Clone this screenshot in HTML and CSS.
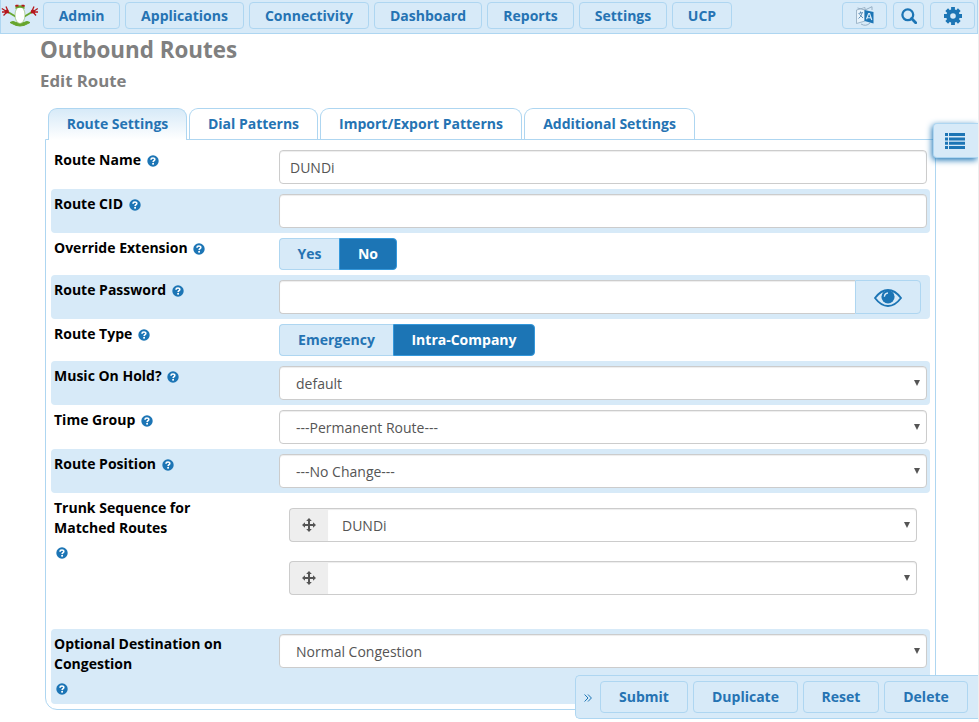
FILE: index.html
```html
<!DOCTYPE html>
<html lang="en">
<head>
    <meta charset="UTF-8">
    <meta name="viewport" content="width=device-width, initial-scale=1.0">
    <title>Outbound Routes</title>
    <link rel="stylesheet" href="styles.css">
</head>
<body>

<svg class="hidden">
    <symbol id="help" viewBox="0 0 12 12">
        <circle cx="6" cy="6" r="5.7" fill="#1c75b5"/>
        <path d="M4 4.7C4.1 2.4 8 2.5 7.8 4.6C7.7 5.7 6.2 5.8 6.1 7.1" fill="none" stroke="#fff" stroke-width="1.6"/>
        <rect x="5.2" y="8" width="1.8" height="1.6" fill="#fff"/>
    </symbol>
    <symbol id="arrows" viewBox="0 0 14 14">
        <path d="M7 0L9.8 3H8V6H11V4.2L14 7L11 9.8V8H8V11H9.8L7 14L4.2 11H6V8H3V9.8L0 7L3 4.2V6H6V3H4.2Z" fill="#555"/>
    </symbol>
</svg>

<!-- Top menu -->
<nav class="navbar">
    <a href="#" class="logo">
        <svg width="38" height="26" viewBox="0 0 38 26">
            <path d="M9 20.5Q12 18.5 15 20.5Q19 22.5 23 20.5Q26 18.500 29 20.500L27 21.500Q19 26.500 11 21.500Z" fill="#67a52d" stroke="#67a52d"/>
            <path d="M14.500 14.500L7 10M23.500 14.500L31 10" stroke="#67a52d" stroke-width="1.800"/>
            <path d="M8 11L.8 6.500M7 9L5 4.500M6 10H1M6 10L2.500 13.500M30 11L36.800 6.500M31 9L33 4.500M32 10H37M32 10L35 13.500" stroke="#b5171c" stroke-width="1.300"/>
            <circle cx="5.800" cy="9.500" r="2" fill="#b5171c"/>
            <circle cx="31.800" cy="9.500" r="2" fill="#b5171c"/>
            <ellipse cx="19" cy="13" rx="5" ry="8.500" fill="#fff" stroke="#84b755" stroke-width=".6"/>
            <path d="M14.500 7V4Q19 2.500 23.500 4V7Q19 4.500 14.500 7" fill="#67a52d"/>
            <path d="M14.500 4.300L15.300 3.600H17.500M20.500 3.600H22.700L23.500 4.300" fill="none" stroke="#b5171c" stroke-width="1.600"/>
        </svg>
    </a>
    <button class="btn admin">Admin</button>
    <button class="btn applications">Applications</button>
    <button class="btn connectivity">Connectivity</button>
    <button class="btn dashboard">Dashboard</button>
    <button class="btn reports">Reports</button>
    <button class="btn settings">Settings</button>
    <button class="btn ucp">UCP</button>
    <div class="nav-right">
        <button class="btn icon-btn">
            <svg width="18" height="20" viewBox="0 0 18 20">
                <path d="M.5 4L9 1.5V15L.5 17.5Z" fill="#e8f3fb" stroke="#8fa9bf" stroke-width=".8"/>
                <path d="M1.5 2L9 4L16 .7V4M5 18Q10 21 14 17" fill="none" stroke="#8fa9bf" stroke-width=".9"/>
                <path d="M8.5 4L17.5 6V17.5L8.5 15Z" fill="#1c75b5"/>
                <path d="M2.5 7.5L7 6.5M4.5 5.5V7M6 7Q5 11 2.5 12.5M3.5 8.5L7 12" fill="none" stroke="#5286af" stroke-width=".9"/>
                <path d="M10.5 13.3L12.6 7.5H13.6L15.8 14M11.5 11.5L14.8 12" fill="none" stroke="#d7eaf8" stroke-width="1.2"/>
            </svg>
        </button>
        <button class="btn icon-btn search">
            <svg width="16" height="16" viewBox="0 0 16 16" fill="none" stroke="#1c75b5">
                <circle cx="6.8" cy="6.8" r="5.4" stroke-width="2.3"/>
                <path d="M10.6 10.6L14.7 14.7" stroke-width="2.8" stroke-linecap="round"/>
            </svg>
        </button>
        <button class="btn icon-btn">
            <svg width="18" height="18" viewBox="0 0 18 18" fill="none" stroke="#1c75b5">
                <circle cx="9" cy="9" r="4.8" stroke-width="4"/>
                <path d="M9 0V3M9 15V18M0 9H3M15 9H18M2.7 2.7L4.8 4.8M13.2 13.2L15.3 15.3M15.3 2.7L13.2 4.8M4.8 13.2L2.7 15.3" stroke-width="3.8"/>
            </svg>
        </button>
    </div>
</nav>

<div class="container">
    <h1>Outbound Routes</h1>
    <h2>Edit Route</h2>

    <div class="tabs">
        <a href="#" class="tab active">Route Settings</a>
        <a href="#" class="tab dial">Dial Patterns</a>
        <a href="#" class="tab import">Import/Export Patterns</a>
        <a href="#" class="tab additional">Additional Settings</a>
    </div>

    <!-- Route settings -->
    <form class="panel">
        <div class="row">
            <label>Route Name <svg class="help"><use href="#help"/></svg></label>
            <input type="text" class="control" value="DUNDi">
        </div>
        <div class="row shaded">
            <label>Route CID <svg class="help"><use href="#help"/></svg></label>
            <input type="text" class="control">
        </div>
        <div class="row">
            <label>Override Extension <svg class="help"><use href="#help"/></svg></label>
            <div class="toggle">
                <span class="yes">Yes</span>
                <span class="no on">No</span>
            </div>
        </div>
        <div class="row shaded">
            <label>Route Password <svg class="help"><use href="#help"/></svg></label>
            <div class="password">
                <input type="text" class="control">
                <button type="button" class="eye">
                    <svg width="28" height="20" viewBox="0 0 28 20">
                        <path d="M1 10Q7 2 14 2T27 10Q21 18 14 18T1 10Z" fill="none" stroke="#1c75b5" stroke-width="1.8"/>
                        <circle cx="14" cy="8.8" r="6.6" fill="#1c75b5"/>
                        <path d="M10.4 8.8Q10.6 5.3 14 5" fill="none" stroke="#d7eaf8" stroke-width="1.3"/>
                    </svg>
                </button>
            </div>
        </div>
        <div class="row">
            <label>Route Type <svg class="help"><use href="#help"/></svg></label>
            <div class="toggle">
                <span class="emergency">Emergency</span>
                <span class="intra on">Intra-Company</span>
            </div>
        </div>
        <div class="row shaded">
            <label>Music On Hold? <svg class="help"><use href="#help"/></svg></label>
            <div class="select"><select class="control"><option>default</option></select></div>
        </div>
        <div class="row">
            <label>Time Group <svg class="help"><use href="#help"/></svg></label>
            <div class="select"><select class="control"><option>---Permanent Route---</option></select></div>
        </div>
        <div class="row shaded">
            <label>Route Position <svg class="help"><use href="#help"/></svg></label>
            <div class="select"><select class="control"><option>---No Change---</option></select></div>
        </div>
        <div class="row trunk-row">
            <label>Trunk Sequence for Matched Routes <svg class="help below"><use href="#help"/></svg></label>
            <div class="trunks">
                <div class="trunk">
                    <span class="addon"><svg width="14" height="14"><use href="#arrows"/></svg></span>
                    <div class="select"><select class="control"><option>DUNDi</option></select></div>
                </div>
                <div class="trunk">
                    <span class="addon"><svg width="14" height="14"><use href="#arrows"/></svg></span>
                    <div class="select"><select class="control"><option></option></select></div>
                </div>
            </div>
        </div>
        <div class="row shaded destination">
            <label>Optional Destination on Congestion <svg class="help below"><use href="#help"/></svg></label>
            <div class="select"><select class="control"><option>Normal Congestion</option></select></div>
        </div>
    </form>
</div>

<!-- Side list toggle -->
<div class="side-toggle">
    <svg width="20" height="16" viewBox="0 0 20 16" fill="#1c75b5">
        <path d="M0 0H3V3H0ZM4 0H20V3H4ZM0 4.4H3V7.4H0ZM4 4.4H20V7.4H4ZM0 8.7H3V11.7H0ZM4 8.7H20V11.7H4ZM0 13H3V16H0ZM4 13H20V16H4Z"/>
    </svg>
</div>

<!-- Action bar -->
<div class="actions">
    <span class="collapse">
        <svg width="8" height="8" viewBox="0 0 8 8" fill="none" stroke="#1c75b5">
            <path d="M.6 .5L4 4L.6 7.5M4 .5L7.4 4L4 7.5"/>
        </svg>
    </span>
    <button class="btn submit">Submit</button>
    <button class="btn duplicate">Duplicate</button>
    <button class="btn reset">Reset</button>
    <button class="btn delete">Delete</button>
</div>

</body>
</html>
```
FILE: styles.css
```css
* {
    box-sizing: border-box;
}
body {
    height: 722px;
    margin: 0;
    overflow: hidden;
    border-right: 1px solid #eee;
    background-color: #fff;
    color: #000;
    font: 14px/20px "Open Sans", sans-serif;
}
.hidden {
    display: none;
}
svg {
    flex: none;
}
h1, h2 {
    margin: 0;
    color: #808080;
    font-weight: 700;
}
h1 {
    padding-top: 3px;
    font-size: 22.4px;
    line-height: 26px;
}
h2 {
    margin-top: 8px;
    font-size: 16.8px;
    line-height: 20px;
}
.navbar {
    display: flex;
    gap: 5px;
    height: 34px;
    padding: 2px 2px 0 0;
    border: 1px solid #aed6f1;
    border-top: 0;
    background-color: #d7eaf8;
}
.logo {
    width: 37px;
    height: 26px;
}
.btn {
    display: flex;
    align-items: center;
    justify-content: center;
    height: 27px;
    padding: 0;
    border: 1px solid #aed6f1;
    border-radius: 4px;
    background-color: #d7eaf8;
    color: #2573b3;
    font: 700 14px/20px "Open Sans", sans-serif;
}
.admin { width: 77px; }
.applications { width: 119px; }
.connectivity { width: 120px; }
.dashboard { width: 108px; }
.reports { width: 87px; }
.settings { width: 88px; }
.ucp { width: 60px; }
.nav-right {
    display: flex;
    gap: 6px;
    margin-left: auto;
}
.icon-btn {
    width: 45px;
}
.search {
    width: 31px;
}
.container {
    padding: 0 42px 0 40px;
}
.tabs {
    display: flex;
    gap: 2px;
    margin: 17px 0 0 8px;
}
.tab {
    height: 31px;
    border: 1px solid #aed6f1;
    border-bottom: 0;
    border-radius: 9px 9px 0 0;
    color: #2573b3;
    font-weight: 700;
    line-height: 30px;
    text-align: center;
    text-decoration: none;
}
.active {
    z-index: 1;
    width: 139px;
    height: 32px;
    margin-bottom: -1px;
    background: linear-gradient(#d7eaf8, #fff);
}
.dial { width: 129px; }
.import { width: 202px; }
.additional { width: 171px; }
.panel {
    width: 891px;
    height: 571px;
    margin-left: 5px;
    padding: 5px;
    border: 1px solid #aed6f1;
    border-radius: 0 0 12px 12px;
}
.row {
    display: flex;
    width: 879px;
    padding: 5px 3px;
    border-radius: 4px;
}
.shaded {
    background-color: #d7eaf8;
}
.row label {
    width: 175px;
    margin-right: 50px;
    font-weight: 700;
}
.help {
    width: 12px;
    height: 12px;
    margin-left: 2px;
    vertical-align: -1.5px;
}
.below {
    display: block;
    margin: 9px 0 0 2px;
}
.control {
    display: block;
    width: 648px;
    height: 34px;
    padding: 0 10px;
    border: 1px solid #ccc;
    border-radius: 4px;
    outline: none;
    background-color: #fff;
    box-shadow: inset 0 1px 1px rgba(0, 0, 0, 0.075);
    color: #555;
    font: 14px/20px "Open Sans", sans-serif;
}
.select {
    position: relative;
}
.select .control {
    padding: 2px 16px 0;
    appearance: none;
}
.select::after {
    position: absolute;
    top: 14px;
    right: 7px;
    border: 3px solid transparent;
    border-top: 6px solid #555;
    border-bottom: 0;
    content: "";
}
.toggle {
    display: flex;
    font-weight: 700;
    line-height: 30px;
    text-align: center;
}
.toggle span {
    height: 32px;
    border: 1px solid #aed6f1;
    border-right: 0;
    border-radius: 4px 0 0 4px;
    background-color: #d7eaf8;
    color: #2573b3;
}
.toggle .on {
    border: 1px solid #3498db;
    border-radius: 0 4px 4px 0;
    background-color: #1c75b5;
    color: #fff;
}
.yes { width: 60px; }
.no { width: 58px; }
.emergency { width: 114px; }
.intra { width: 142px; }
.password {
    display: flex;
}
.password .control {
    width: 576px;
    border-right: 0;
    border-radius: 4px 0 0 4px;
}
.eye {
    display: flex;
    align-items: center;
    justify-content: center;
    width: 66px;
    height: 34px;
    padding: 1px 0 0;
    border: 1px solid #aed6f1;
    border-radius: 0 4px 4px 0;
    background-color: #d7eaf8;
}
.trunk-row {
    height: 136px;
}
.trunks {
    display: flex;
    flex-direction: column;
    gap: 19px;
    padding: 10px;
}
.trunk {
    display: flex;
}
.trunk .control {
    width: 589px;
    padding: 2px 14px 0;
    border-left: 0;
    border-radius: 0 4px 4px 0;
}
.addon {
    display: flex;
    align-items: center;
    justify-content: center;
    width: 39px;
    height: 34px;
    border: 1px solid #ccc;
    border-right: 0;
    border-radius: 4px 0 0 4px;
    background-color: #eee;
}
.destination {
    height: 75px;
}
.side-toggle {
    position: absolute;
    top: 123px;
    right: 1px;
    width: 45px;
    height: 35px;
    padding: 9px 0 0 11px;
    border: 1px solid #aed6f1;
    border-right: 0;
    border-radius: 4px 0 0 4px;
    background-color: #d7eaf8;
    box-shadow: -1px 2px 6px #1c75b5;
    clip-path: inset(-10px 0 -10px -10px);
}
.actions {
    display: flex;
    position: absolute;
    right: 1px;
    bottom: 3px;
    gap: 5px;
    width: 403px;
    height: 44px;
    padding: 5px 0 0 8px;
    border: 1px solid #aed6f1;
    border-right: 0;
    border-radius: 5px 0 0 5px;
    background-color: #d7eaf8;
}
.actions .btn {
    height: 32px;
}
.collapse {
    display: flex;
    align-items: center;
    width: 11px;
    height: 34px;
}
.submit { width: 88px; }
.duplicate { width: 105px; }
.reset { width: 76px; }
.delete { width: 84px; }
```
